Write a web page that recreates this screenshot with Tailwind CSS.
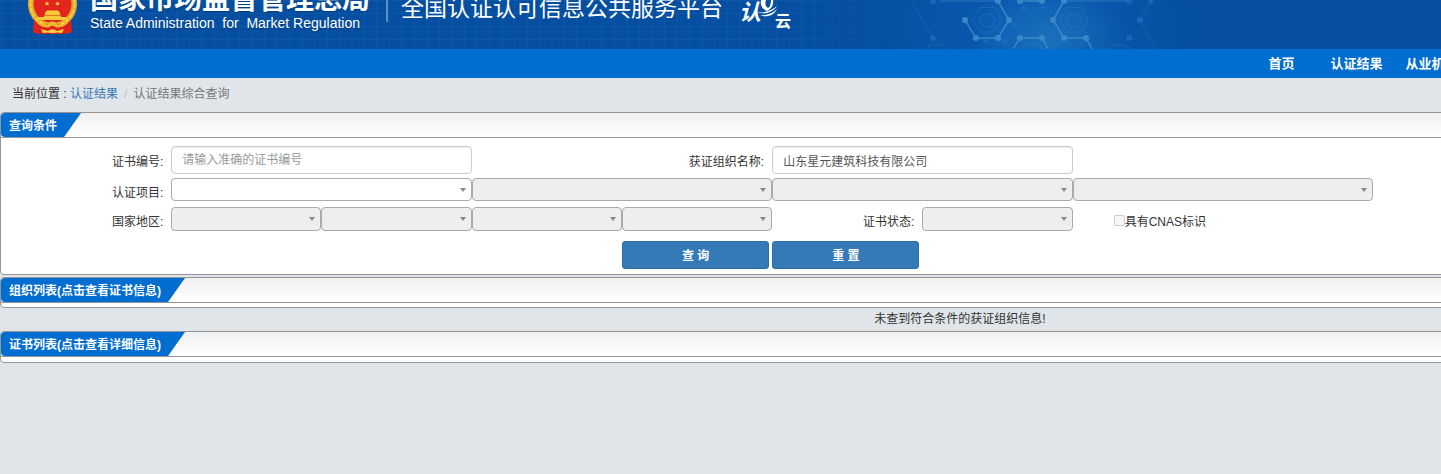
<!DOCTYPE html>
<html lang="zh-CN">
<head>
  <meta charset="UTF-8" />
  <meta name="viewport" content="width=device-width, initial-scale=1.0"/>
  <title>全国认证认可信息公共服务平台</title>
  <script src="https://cdn.jsdelivr.net/npm/@tailwindcss/browser@4"></script>
</head>
<body class="bg-[#e0e5e9] min-h-screen overflow-hidden text-xs text-[#333] font-['Liberation_Sans','Noto_Sans_CJK_SC',sans-serif]">
  <div class="min-w-[1920px]">
    <!-- Banner -->
    <header class="relative h-[49px] overflow-hidden bg-[#064fa0] text-white">
      <svg class="absolute inset-0" width="1441" height="49" viewBox="0 0 1441 49" aria-hidden="true">
        <defs>
          <pattern id="grid" width="12.5" height="13" patternUnits="userSpaceOnUse" x="1.5">
            <path d="M0.5 0V13M0 0.5H12.5" stroke="#1b6cbd" stroke-opacity=".3" fill="none"/>
          </pattern>
          <linearGradient id="fade"><stop offset=".85" stop-color="#fff"/><stop offset="1" stop-color="#000"/></linearGradient>
          <mask id="gridMask"><rect width="930" height="49" fill="url(#fade)"/></mask>
          <radialGradient id="glow"><stop stop-color="#1b70bb"/><stop offset="1" stop-color="#1b70bb" stop-opacity="0"/></radialGradient>
          <radialGradient id="glow2"><stop stop-color="#0a5bb5"/><stop offset="1" stop-color="#0a5bb5" stop-opacity="0"/></radialGradient>
        </defs>
        <rect width="930" height="49" fill="url(#grid)" mask="url(#gridMask)"/>
        <ellipse cx="1030" cy="25" rx="170" ry="90" fill="url(#glow2)"/>
        <ellipse cx="1048" cy="40" rx="78" ry="58" fill="url(#glow)"/>
        <g fill="none" stroke="#3a8ac8" stroke-opacity=".3">
          <path d="M980 7.500H994L1002 20L994 32H980L973 20ZM983 14H991L995 20L991 27H983L979 20Z"/>
          <path d="M1067 7.500H1081L1088 20L1081 32H1067L1060 20ZM1070 14H1078L1082 20L1078 27H1070L1066 20Z"/>
          <path d="M1022 49L1025 44H1039L1042 49M912 2L933 38M1151 1L1140 20L1156 49M927 49L930 45H946L949 49M1110 49L1113 45H1126L1129 49"/>
        </g>
        <g fill="none" stroke="#4d9bcb" stroke-opacity=".65" stroke-width="1.500">
          <path d="M998 1L1009 20L998 38H976L965 20M1064 1L1053 20L1064 38H1086L1092 49M1013 49L1020 38H1042L1048 49M1020 1H1042"/>
          <path d="M940 1H998M1064 1H1129" stroke-opacity=".35"/>
        </g>
        <g fill="#3d86c9">
          <circle cx="998" cy="1" r="3"/><circle cx="1020" cy="1" r="3"/><circle cx="1042" cy="1" r="3"/><circle cx="1064" cy="1" r="3"/>
          <circle cx="965" cy="20" r="3"/><circle cx="1009" cy="20" r="3"/><circle cx="1053" cy="20" r="3"/>
          <circle cx="976" cy="38" r="3"/><circle cx="998" cy="38" r="3"/><circle cx="1020" cy="38" r="3"/><circle cx="1042" cy="38" r="3"/><circle cx="1064" cy="38" r="3"/><circle cx="1086" cy="38" r="3"/>
        </g>
        <g fill="#1d6fc4" fill-opacity=".7">
          <circle cx="933" cy="1" r="3"/><circle cx="933" cy="38" r="3"/><circle cx="1129" cy="1" r="3"/><circle cx="1129" cy="38" r="3"/><circle cx="1140" cy="20" r="3"/><circle cx="1151" cy="1" r="2.500"/>
          <circle cx="1014" cy="25" r="2.500"/><circle cx="1024" cy="8" r="2.500"/><circle cx="1043" cy="8" r="2.500"/><circle cx="1005" cy="41" r="2.500"/><circle cx="986" cy="41" r="2"/>
        </g>
      </svg>

      <div class="relative flex pl-[27px]">
        <!-- National emblem -->
        <svg class="w-[51px] h-[36px] shrink-0" viewBox="0 0 51 36" aria-hidden="true">
          <path d="M8 19L7 33L11 31L15 34H36L40 31L44 33L43 19Z" fill="#d8201c"/>
          <circle cx="25.500" cy="4" r="24.500" fill="#e9a92c"/>
          <circle cx="25.500" cy="4" r="22" fill="none" stroke="#f8d23c" stroke-width="2" stroke-dasharray="4 1.500"/>
          <circle cx="25.500" cy="4" r="19" fill="#e3261d"/>
          <path d="M20 1.500l.8 1.300 1.500.2-1.100 1 .2 1.500-1.400-.7-1.400.7.2-1.500-1.100-1 1.500-.2zM30.500 1.500l.8 1.300 1.500.2-1.100 1 .2 1.500-1.400-.7-1.400.7.2-1.500-1.100-1 1.500-.2z" fill="#f8d23c"/>
          <path d="M20 10.500H31L33 12.500V15H34V17H41L39 20H12L10 17H17V15H18V12.500Z" fill="#f8c83a"/>
          <path d="M17 15.500H34" stroke="#d67a1e" stroke-width="1"/>
          <path d="M7 20L15 26L21 24Q25.500 20 30 24L36 26L44 20L45 32L40 34L37 33L33 34L25.500 30L18 34L14 33L11 34L6 32Z" fill="#dd221c"/>
          <path d="M8 20Q14 25 20 25L22 22.500Q25.500 20.500 29 22.500L31 25Q37 25 43 20L40 24Q35 28 29 27.500Q25.500 24 22 27.500Q16 28 11 24Z" fill="#f0b630"/>
          <path d="M14 29L21 31Q25.500 27.500 30 31L37 29L35 33L30 32.500L28 33H23L21 32.500L16 33Z" fill="#f8cf42"/>
        </svg>
        <div class="ml-3 w-[296px] shrink-0 -mt-4">
          <h1 class="text-[28px] leading-[31px] font-bold whitespace-nowrap text-shadow-sm">国家市场监督管理总局</h1>
          <p class="text-sm leading-4 whitespace-pre text-shadow-sm">State Administration  for  Market Regulation</p>
        </div>
        <div class="w-0.5 h-[22px] shrink-0 bg-[#5a8fc9]"></div>
        <h2 class="ml-[13px] -mt-2 w-[338px] text-[23px] leading-8 whitespace-nowrap">全国认证认可信息公共服务平台</h2>
        <svg class="w-[56px] h-[32px] shrink-0" viewBox="0 0 56 32" role="img" aria-label="认云">
          <g fill="#fff">
            <text x="0" y="20" font-size="22" font-weight="bold" font-style="italic">认</text>
            <path d="M22 0C21 5 23 9 28 11C32 9 35 5 34 0H32C32 4 31 7 29 8C26 6 26 3 27 0Z"/>
            <path d="M18 12Q28 14 38 6Q35 11 28 13Q22 14 18 12ZM21 15Q31 16 38 9Q35 15 29 16Q25 16.500 21 15Z"/>
            <text x="36" y="27" font-size="16" font-weight="bold">云</text>
          </g>
        </svg>
      </div>
    </header>

    <nav class="flex h-[29px] items-center bg-[#006dd0] pl-[1244px] text-[13px] font-bold text-white">
      <a href="#" class="w-[75px] text-center">首页</a>
      <a href="#" class="w-[75px] text-center">认证结果</a>
      <a href="#" class="w-[75px] text-center">从业机构</a>
    </nav>

    <div class="flex h-[34px] items-center pl-3 pb-[3px]">
      <span class="whitespace-pre">当前位置 : </span>
      <a href="#" class="text-[#337ab7]">认证结果</a>
      <span class="px-1.5 text-[#bbb]">/</span>
      <span class="text-[#777]">认证结果综合查询</span>
    </div>

    <!-- Search panel -->
    <section class="rounded border border-[#959595] bg-white">
      <div class="flex h-[25px] rounded-t border-b border-[#959595] bg-linear-to-b from-[#f0f0f0] to-white">
        <h3 class="rounded-l bg-[#006dd0] pl-2 pr-6 leading-[26px] font-bold text-white [clip-path:polygon(0_0,100%_0,calc(100%-17px)_100%,0_100%)]">查询条件</h3>
      </div>
      <form class="ml-5 w-[94%] pt-2 pb-[5px]">
        <div class="grid grid-cols-12 items-center">
          <label for="certNo" class="pr-2 pt-1 text-right">证书编号:</label>
          <input id="certNo" type="text" placeholder="请输入准确的证书编号" class="col-span-2 h-7 rounded border border-[#ccc] px-2.5 text-[#555] placeholder-[#999] shadow-[inset_0_1px_1px_rgba(0,0,0,0.075)]"/>
          <label for="orgName" class="col-span-2 pr-2 pt-1 text-right">获证组织名称:</label>
          <input id="orgName" type="text" value="山东星元建筑科技有限公司" class="col-span-2 h-7 rounded border border-[#ccc] px-2.5 text-[#555] shadow-[inset_0_1px_1px_rgba(0,0,0,0.075)]"/>
        </div>

        <div class="mt-1 grid h-[23px] grid-cols-12 items-center">
          <label for="project1" class="pr-2 pt-1.5 text-right">认证项目:</label>
          <div class="relative col-span-2">
            <select id="project1" class="block h-[23px] w-full appearance-none rounded border border-[#aaa] bg-white"></select>
            <svg class="pointer-events-none absolute right-[6px] top-[10px]" width="6" height="4" viewBox="0 0 6 4" fill="#888"><path d="M0 0H6L3 4Z"/></svg>
          </div>
          <div class="relative col-span-2">
            <select aria-label="认证项目" disabled class="block h-[23px] w-full appearance-none rounded border border-[#aaa] bg-[#eee]"></select>
            <svg class="pointer-events-none absolute right-[6px] top-[10px]" width="6" height="4" viewBox="0 0 6 4" fill="#888"><path d="M0 0H6L3 4Z"/></svg>
          </div>
          <div class="relative col-span-2">
            <select aria-label="认证项目" disabled class="block h-[23px] w-full appearance-none rounded border border-[#aaa] bg-[#eee]"></select>
            <svg class="pointer-events-none absolute right-[6px] top-[10px]" width="6" height="4" viewBox="0 0 6 4" fill="#888"><path d="M0 0H6L3 4Z"/></svg>
          </div>
          <div class="relative col-span-2">
            <select aria-label="认证项目" disabled class="block h-[23px] w-full appearance-none rounded border border-[#aaa] bg-[#eee]"></select>
            <svg class="pointer-events-none absolute right-[6px] top-[10px]" width="6" height="4" viewBox="0 0 6 4" fill="#888"><path d="M0 0H6L3 4Z"/></svg>
          </div>
        </div>

        <div class="mt-1.5 grid h-6 grid-cols-12 items-center">
          <label for="region1" class="pr-2 pt-1.5 text-right">国家地区:</label>
          <div class="relative">
            <select id="region1" disabled class="block h-6 w-full appearance-none rounded border border-[#aaa] bg-[#eee]"></select>
            <svg class="pointer-events-none absolute right-[6px] top-[10px]" width="6" height="4" viewBox="0 0 6 4" fill="#888"><path d="M0 0H6L3 4Z"/></svg>
          </div>
          <div class="relative">
            <select aria-label="国家地区" disabled class="block h-6 w-full appearance-none rounded border border-[#aaa] bg-[#eee]"></select>
            <svg class="pointer-events-none absolute right-[6px] top-[10px]" width="6" height="4" viewBox="0 0 6 4" fill="#888"><path d="M0 0H6L3 4Z"/></svg>
          </div>
          <div class="relative">
            <select aria-label="国家地区" disabled class="block h-6 w-full appearance-none rounded border border-[#aaa] bg-[#eee]"></select>
            <svg class="pointer-events-none absolute right-[6px] top-[10px]" width="6" height="4" viewBox="0 0 6 4" fill="#888"><path d="M0 0H6L3 4Z"/></svg>
          </div>
          <div class="relative">
            <select aria-label="国家地区" disabled class="block h-6 w-full appearance-none rounded border border-[#aaa] bg-[#eee]"></select>
            <svg class="pointer-events-none absolute right-[6px] top-[10px]" width="6" height="4" viewBox="0 0 6 4" fill="#888"><path d="M0 0H6L3 4Z"/></svg>
          </div>
          <label for="certStatus" class="pr-2 pt-1.5 text-right">证书状态:</label>
          <div class="relative">
            <select id="certStatus" disabled class="block h-6 w-full appearance-none rounded border border-[#aaa] bg-[#eee]"></select>
            <svg class="pointer-events-none absolute right-[6px] top-[10px]" width="6" height="4" viewBox="0 0 6 4" fill="#888"><path d="M0 0H6L3 4Z"/></svg>
          </div>
          <div class="flex items-center pl-[41px] pt-1.5">
            <input id="cnas" type="checkbox" disabled class="mb-1 h-[11px] w-[11px] shrink-0 appearance-none rounded-xs border border-[#ccc] bg-[#f8f8f8]"/>
            <label for="cnas" class="whitespace-nowrap">具有CNAS标识</label>
          </div>
        </div>

        <div class="mt-2.5 grid grid-cols-12">
          <div class="col-start-5 pr-[3px]">
            <button type="button" class="h-7 w-full rounded-[3px] border border-[#2e6da4] bg-[#337ab7] pt-0.5 font-bold text-white">查 询</button>
          </div>
          <div class="pr-[3px]">
            <button type="reset" class="h-7 w-full rounded-[3px] border border-[#2e6da4] bg-[#337ab7] pt-0.5 font-bold text-white">重 置</button>
          </div>
        </div>
      </form>
    </section>

    <!-- Organisations -->
    <section class="mt-0.5 rounded border border-[#959595] bg-white pb-1">
      <div class="flex h-[25px] rounded-t border-b border-[#959595] bg-linear-to-b from-[#f0f0f0] to-white">
        <h3 class="rounded-l bg-[#006dd0] pl-2 pr-6 leading-[26px] font-bold text-white [clip-path:polygon(0_0,100%_0,calc(100%-17px)_100%,0_100%)]">组织列表(点击查看证书信息)</h3>
      </div>
    </section>
    <p class="h-[23px] leading-[22px] text-center">未查到符合条件的获证组织信息!</p>

    <!-- Certificates -->
    <section class="rounded border border-[#959595] bg-white pb-[5px]">
      <div class="flex h-[25px] rounded-t border-b border-[#959595] bg-linear-to-b from-[#f0f0f0] to-white">
        <h3 class="rounded-l bg-[#006dd0] pl-2 pr-6 leading-[26px] font-bold text-white [clip-path:polygon(0_0,100%_0,calc(100%-17px)_100%,0_100%)]">证书列表(点击查看详细信息)</h3>
      </div>
    </section>
  </div>
</body>
</html>
